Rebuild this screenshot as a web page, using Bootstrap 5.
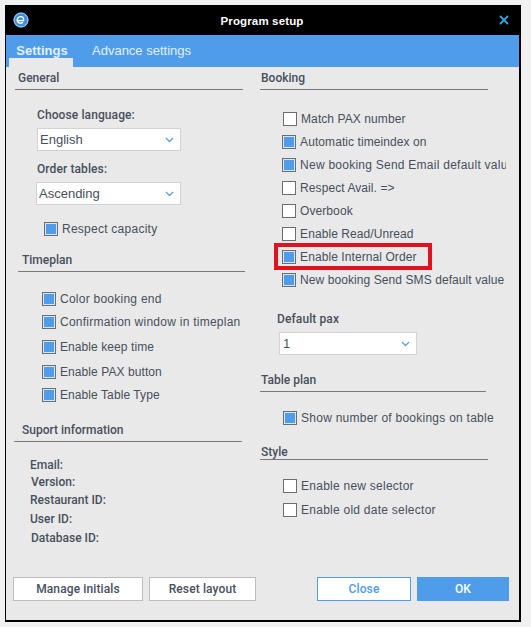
<!DOCTYPE html>
<html lang="en">
<head>
  <meta charset="UTF-8">
  <title>Program setup</title>
  <link href="https://cdn.jsdelivr.net/npm/bootstrap@5.3.0/dist/css/bootstrap.min.css" rel="stylesheet">
  <style>
    html, body { height: 100%; }
    body {
      background: #f1f1f1;
      font-family: Roboto, "Liberation Sans", sans-serif;
      font-size: 12px;
      color: #46505c;
      padding: 5px 10px 5px 5px;
      overflow: hidden;
    }
    .setup-window {
      width: 516px;
      height: 617px;
      background: #e9e9e9;
      border: 1px solid #000;
      border-width: 0 2px 2px 1px;
    }
    .title-bar {
      height: 30px;
      background: #000;
      color: #fff;
      font-family: "Liberation Sans", sans-serif;
      font-weight: 700;
      font-size: 11.5px;
      padding-left: 7px;
      padding-right: 10px;
    }
    .title-bar .title-text { flex: 1; text-align: center; padding: 3px 4px 0 0; letter-spacing: .15px; }
    .tab-bar {
      height: 32px;
      background: #4f9ceb;
      padding-left: 3px;
      font-family: "Liberation Sans", sans-serif;
      font-size: 13px;
    }
    .tab-item { color: #e3f0fd; padding-top: 6px; }
    .tab-active {
      width: 64px;
      height: 26px;
      margin-top: 6px;
      background: linear-gradient(#4f9ceb 0 17px, #e9e9e9 17px);
      font-weight: 700;
      text-align: center;
      padding: 0 0 0 2px;
    }
    .tab-next { margin-left: 19px; }
    .form-area { height: 510px; position: relative; }
    .col-left { width: 246px; }
    .col-right { width: 269px; }
    .sect-head {
      font-weight: 500;
      font-size: 12px;
      line-height: 14px;
      border-bottom: 1px solid #7a7a7a;
      padding-bottom: 4px;
      padding-left: 1px;
    }
    .field-label { font-weight: 500; line-height: 14px; letter-spacing: .1px; }
    .pick {
      height: 23px;
      background: #fff;
      border: 1px solid #d2d2d2;
      font-family: "Liberation Sans", sans-serif;
      font-size: 13px;
      padding: 0 6px 0 2px;
    }
    .pick svg { width: 9px; height: 6px; }
    .tick-row {
      height: 14px;
      font-family: "Liberation Sans", sans-serif;
      font-size: 12px;
      letter-spacing: .25px;
      white-space: nowrap;
      gap: 4px;
    }
    .tick-tight { letter-spacing: .08px; }
    .tick-box {
      width: 14px; height: 14px;
      flex: none;
      background: #fff;
      border: 1px solid #6d6d6d;
    }
    .tick-on { background: #4f9ceb; box-shadow: inset 0 0 0 1px #d6e6f7; }
    .clip-line { width: 224px; overflow: hidden; }
    .mark-red {
      position: absolute;
      left: 268px; top: 176px;
      width: 158px; height: 27px;
      border: 4px solid #e0121f;
      pointer-events: none;
    }
    .info-line { line-height: 14px; font-weight: 500; }
    .foot-btn {
      height: 24px;
      border-radius: 0;
      font-size: 12px;
      font-weight: 500;
      letter-spacing: .12px;
      padding: 0;
      background: #fff;
      color: #46505c;
      border: 1px solid #bdbdbd;
    }
    .btn-manage { width: 130px; margin-left: 7px; }
    .btn-reset { width: 107px; margin-left: 6px; }
    .btn-close-alt { width: 94px; margin-left: 61px; color: #4f9ceb; border-color: #4f9ceb; }
    .btn-ok { width: 92px; margin-left: 6px; background: #4f9ceb; border-color: #4f9ceb; color: #fff; }

    .sh-gen { margin: 4px 0 0 9px; width: 228px; padding-left: 3px; }
    .lb-lang { margin: 18px 0 0 31px; }
    .pk-lang { margin: 6px 0 0 31px; width: 144px; }
    .lb-order { margin: 11px 0 0 31px; }
    .pk-order { margin: 6px 0 0 30px; width: 145px; }
    .tk-cap { margin: 17px 0 0 38px; }
    .sh-time { margin: 17px 0 0 12px; width: 227px; padding-left: 4px; }
    .tk-a { margin: 20px 0 0 36px; }
    .tk-b { margin: 9px 0 0 36px; }
    .tk-c { margin: 11px 0 0 36px; }
    .sh-sup { margin: 21px 0 0 8px; width: 228px; padding-left: 8px; }
    .in-a { margin: 16px 0 0 24px; }
    .in-b { margin: 3px 0 0 25px; }
    .in-c { margin: 4px 0 0 24px; }
    .in-d { margin: 5px 0 0 24px; }
    .in-e { margin: 5px 0 0 25px; }

    .sh-book { margin: 4px 0 0 9px; width: 228px; }
    .tk-r1 { margin: 22px 0 0 32px; }
    .tk-r { margin: 9px 0 0 31px; }
    .lb-pax { margin: 25px 0 0 26px; }
    .pk-pax { margin: 6px 0 0 28px; width: 138px; padding-left: 3px; }
    .sh-plan { margin: 18px 0 0 9px; width: 226px; }
    .tk-show { margin: 19px 0 0 32px; }
    .sh-style { margin: 20px 0 0 9px; width: 228px; padding-bottom: 0; }
    .tk-sel { margin: 19px 0 0 32px; }
    .tk-old { margin: 10px 0 0 32px; }
  </style>
</head>
<body>
  <div class="setup-window d-flex flex-column">
    <div class="title-bar d-flex align-items-center">
      <svg width="16" height="16" viewBox="0 0 16 16">
        <circle cx="8" cy="8" r="7.5" fill="#3d8fd9"/>
        <circle cx="8" cy="8" r="7" fill="none" stroke="#a9d3f2" stroke-width="1"/>
        <path d="M4.500 8.600h6c.6-2.600-1-4.200-3-4-2.300.2-3.600 2.300-3.200 4.500.4 1.900 3 2.700 5.700 1.200" fill="none" stroke="#fff" stroke-width="1.400"/>
      </svg>
      <div class="title-text">Program setup</div>
      <svg width="10" height="10" viewBox="0 0 10 10"><path d="M1 1l8 8M9 1L1 9" stroke="#27a9e0" stroke-width="1.800"/></svg>
    </div>
    <div class="tab-bar d-flex">
      <div class="tab-item tab-active">Settings</div>
      <div class="tab-item tab-next">Advance settings</div>
    </div>
    <div class="form-area d-flex">
      <div class="col-left">
        <div class="sect-head sh-gen">General</div>
        <div class="field-label lb-lang">Choose language:</div>
        <div class="pick pk-lang d-flex align-items-center justify-content-between"><span>English</span><svg viewBox="0 0 9 6"><path d="M1 1l3.500 3.500L8 1" fill="none" stroke="#5f9ed8" stroke-width="1.300"/></svg></div>
        <div class="field-label lb-order">Order tables:</div>
        <div class="pick pk-order d-flex align-items-center justify-content-between"><span>Ascending</span><svg viewBox="0 0 9 6"><path d="M1 1l3.500 3.500L8 1" fill="none" stroke="#5f9ed8" stroke-width="1.300"/></svg></div>
        <div class="tick-row tk-cap d-flex align-items-center"><span class="tick-box tick-on"></span><span>Respect capacity</span></div>

        <div class="sect-head sh-time">Timeplan</div>
        <div class="tick-row tk-a d-flex align-items-center"><span class="tick-box tick-on"></span><span>Color booking end</span></div>
        <div class="tick-row tk-b d-flex align-items-center"><span class="tick-box tick-on"></span><span>Confirmation window in timeplan</span></div>
        <div class="tick-row tk-c tick-tight d-flex align-items-center"><span class="tick-box tick-on"></span><span>Enable keep time</span></div>
        <div class="tick-row tk-c tick-tight d-flex align-items-center"><span class="tick-box tick-on"></span><span>Enable PAX button</span></div>
        <div class="tick-row tk-b tick-tight d-flex align-items-center"><span class="tick-box tick-on"></span><span>Enable Table Type</span></div>

        <div class="sect-head sh-sup">Suport information</div>
        <div class="info-line in-a">Email:</div>
        <div class="info-line in-b">Version:</div>
        <div class="info-line in-c">Restaurant ID:</div>
        <div class="info-line in-d">User ID:</div>
        <div class="info-line in-e">Database ID:</div>
      </div>
      <div class="col-right">
        <div class="sect-head sh-book">Booking</div>
        <div class="tick-row tk-r1 tick-tight d-flex align-items-center"><span class="tick-box"></span><span>Match PAX number</span></div>
        <div class="tick-row tk-r tick-tight d-flex align-items-center"><span class="tick-box tick-on"></span><span>Automatic timeindex on</span></div>
        <div class="tick-row tk-r clip-line d-flex align-items-center"><span class="tick-box tick-on"></span><span>New booking Send Email default value</span></div>
        <div class="tick-row tk-r tick-tight d-flex align-items-center"><span class="tick-box"></span><span>Respect Avail. =&gt;</span></div>
        <div class="tick-row tk-r tick-tight d-flex align-items-center"><span class="tick-box"></span><span>Overbook</span></div>
        <div class="tick-row tk-r tick-tight d-flex align-items-center"><span class="tick-box"></span><span>Enable Read/Unread</span></div>
        <div class="tick-row tk-r tick-tight d-flex align-items-center"><span class="tick-box tick-on"></span><span>Enable Internal Order</span></div>
        <div class="tick-row tk-r tick-tight d-flex align-items-center"><span class="tick-box tick-on"></span><span>New booking Send SMS default value</span></div>
        <div class="field-label lb-pax">Default pax</div>
        <div class="pick pk-pax d-flex align-items-center justify-content-between"><span>1</span><svg viewBox="0 0 9 6"><path d="M1 1l3.500 3.500L8 1" fill="none" stroke="#5f9ed8" stroke-width="1.300"/></svg></div>
        <div class="sect-head sh-plan">Table plan</div>
        <div class="tick-row tk-show d-flex align-items-center"><span class="tick-box tick-on"></span><span>Show number of bookings on table</span></div>
        <div class="sect-head sh-style">Style</div>
        <div class="tick-row tk-sel d-flex align-items-center"><span class="tick-box"></span><span>Enable new selector</span></div>
        <div class="tick-row tk-old d-flex align-items-center"><span class="tick-box"></span><span>Enable old date selector</span></div>
      </div>
      <div class="mark-red"></div>
    </div>
    <div class="d-flex">
      <button type="button" class="btn foot-btn btn-manage">Manage initials</button>
      <button type="button" class="btn foot-btn btn-reset">Reset layout</button>
      <button type="button" class="btn foot-btn btn-close-alt">Close</button>
      <button type="button" class="btn foot-btn btn-ok">OK</button>
    </div>
  </div>
  <script src="https://cdn.jsdelivr.net/npm/bootstrap@5.3.0/dist/js/bootstrap.bundle.min.js"></script>
</body>
</html>
